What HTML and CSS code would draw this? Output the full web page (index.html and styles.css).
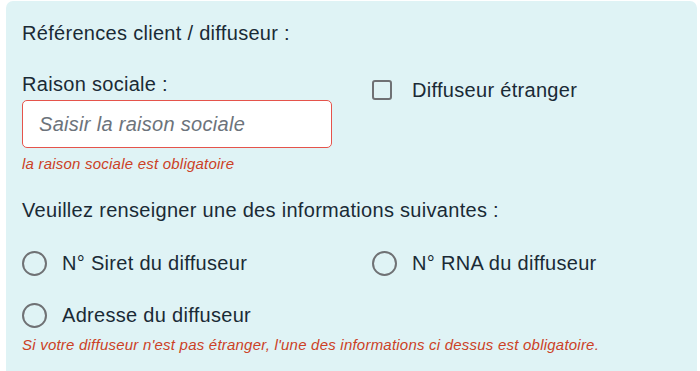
FILE: index.html
```html
<!DOCTYPE html>
<html lang="fr">
<head>
<meta charset="utf-8">
<title>Références client / diffuseur</title>
<link rel="stylesheet" href="styles.css">
</head>
<body>
<section class="panel">
  <div class="title">Références client / diffuseur :</div>
  <div class="row">
    <div class="col">
      <label class="label" for="rs">Raison sociale :</label>
      <input id="rs" class="field" type="text" placeholder="Saisir la raison sociale">
      <div class="error error-first">la raison sociale est obligatoire</div>
    </div>
    <div class="col col-right">
      <label class="check">
        <input type="checkbox" class="box">
        <span>Diffuseur étranger</span>
      </label>
    </div>
  </div>
  <div class="question">Veuillez renseigner une des informations suivantes :</div>
  <div class="options">
    <label class="opt"><input type="radio" name="info" class="radio"><span>N° Siret du diffuseur</span></label>
    <label class="opt"><input type="radio" name="info" class="radio"><span>N° RNA du diffuseur</span></label>
    <label class="opt"><input type="radio" name="info" class="radio"><span>Adresse du diffuseur</span></label>
  </div>
  <div class="error error-last">Si votre diffuseur n'est pas étranger, l'une des informations ci dessus est obligatoire.</div>
</section>
</body>
</html>
```
FILE: styles.css
```css
html, body {
  margin: 0;
  padding: 0;
  background: #ffffff;
}
body {
  font-family: "Liberation Sans", Arial, sans-serif;
  color: #1a2a35;
}
.panel {
  margin: 1px 3px 0 6px;
  padding: 17px 16px 0 16px;
  background: #dff3f5;
  border-radius: 7px 7px 0 0;
  height: 370px;
  box-sizing: border-box;
  overflow: hidden;
}
.title, .label, .question, .check span, .opt span {
  font-size: 20px;
  letter-spacing: 0.3px;
  line-height: 30px;
}
.row {
  display: grid;
  grid-template-columns: 350px 1fr;
  margin-top: 21px;
}
.col {
  display: flex;
  flex-direction: column;
  align-items: flex-start;
}
.label {
  display: block;
}
.field {
  margin-top: 1px;
  width: 310px;
  height: 48px;
  box-sizing: border-box;
  border: 1px solid #e5534b;
  border-radius: 5px;
  background: #ffffff;
  padding: 0 16px;
  font-family: "Liberation Sans", Arial, sans-serif;
  font-size: 20px;
  letter-spacing: 0.3px;
  color: #1a2a35;
  outline: none;
}
.field::placeholder {
  color: #6c737b;
  font-style: italic;
}
.error {
  font-size: 15px;
  line-height: 22px;
  letter-spacing: 0.22px;
  font-style: italic;
  color: #cc4125;
}
.error-first {
  margin-top: 5px;
}
.col-right {
  padding-top: 6px;
}
.check, .opt {
  display: flex;
  align-items: center;
}
.box {
  appearance: none;
  -webkit-appearance: none;
  margin: 0 20px 0 0;
  width: 20px;
  height: 20px;
  border: 2.5px solid #6f7174;
  border-radius: 3px;
  background: transparent;
  box-sizing: border-box;
}
.question {
  margin-top: 20px;
}
.options {
  display: grid;
  grid-template-columns: 350px 1fr;
  row-gap: 22px;
  margin-top: 23px;
}
.radio {
  appearance: none;
  -webkit-appearance: none;
  margin: 0 15px 0 0;
  width: 25px;
  height: 25px;
  border: 2.5px solid #6f7174;
  border-radius: 50%;
  background: transparent;
  box-sizing: border-box;
}
.error-last {
  margin-top: 4px;
}
```
